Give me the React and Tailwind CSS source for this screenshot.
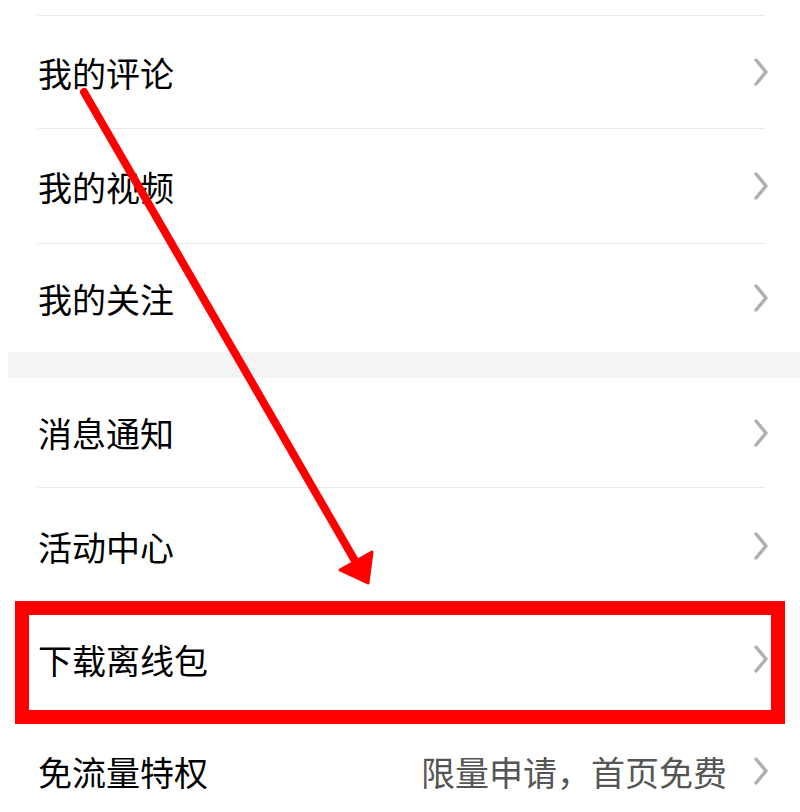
import React from 'react';

const Chevron = () => (
    <svg width="20" height="32" viewBox="0 0 20 32" className="shrink-0">
        <path d="M5 4 L15 16 L5 28" fill="none" stroke="#b0b0b0" strokeWidth="3.5" strokeLinecap="round" strokeLinejoin="round" />
    </svg>
);

const Row = ({ title, extra, h, divider = true }) => (
    <div className={`ml-[38px] mr-[35px] flex items-center justify-between ${h} ${divider ? 'border-b border-[#e8e8e8]' : ''}`}>
        <span className="text-[34px] text-black">{title}</span>
        <div className="flex items-center gap-[24px] -mr-[6px]">
            {extra && <span className="text-[34px] text-[#555]">{extra}</span>}
            <Chevron />
        </div>
    </div>
);

const App = () => {
    return (
        <div
            className="relative w-[800px] h-[812px] overflow-hidden bg-white"
            style={{ fontFamily: '"Noto Sans CJK SC", "Noto Sans", sans-serif' }}
        >
            <div className="ml-[38px] mr-[35px] h-[16px] border-b border-[#e8e8e8]" />
            <Row title="我的评论" h="h-[113px]" />
            <Row title="我的视频" h="h-[115px]" />
            <Row title="我的关注" h="h-[108px]" divider={false} />
            <div className="ml-[8px] h-[26px] bg-[#f4f4f4]" />
            <Row title="消息通知" h="h-[110px]" />
            <Row title="活动中心" h="h-[116px]" divider={false} />
            <Row title="下载离线包" h="h-[110px]" divider={false} />
            <Row title="免流量特权" extra="限量申请，首页免费" h="h-[114px]" divider={false} />

            {/* annotation: red highlight box */}
            <div className="absolute left-[15px] top-[601px] w-[770px] h-[123px] border-[14px] border-[#ff0000]" />

            {/* annotation: arrow */}
            <svg className="absolute left-0 top-0" width="800" height="812">
                <line x1="84" y1="92" x2="358" y2="566" stroke="#ff0000" strokeWidth="8" strokeLinecap="round" />
                <polygon points="340,570 372,552 368,583" fill="#ff0000" stroke="#ff0000" strokeWidth="3" strokeLinejoin="round" />
            </svg>
        </div>
    );
};

export default App;
